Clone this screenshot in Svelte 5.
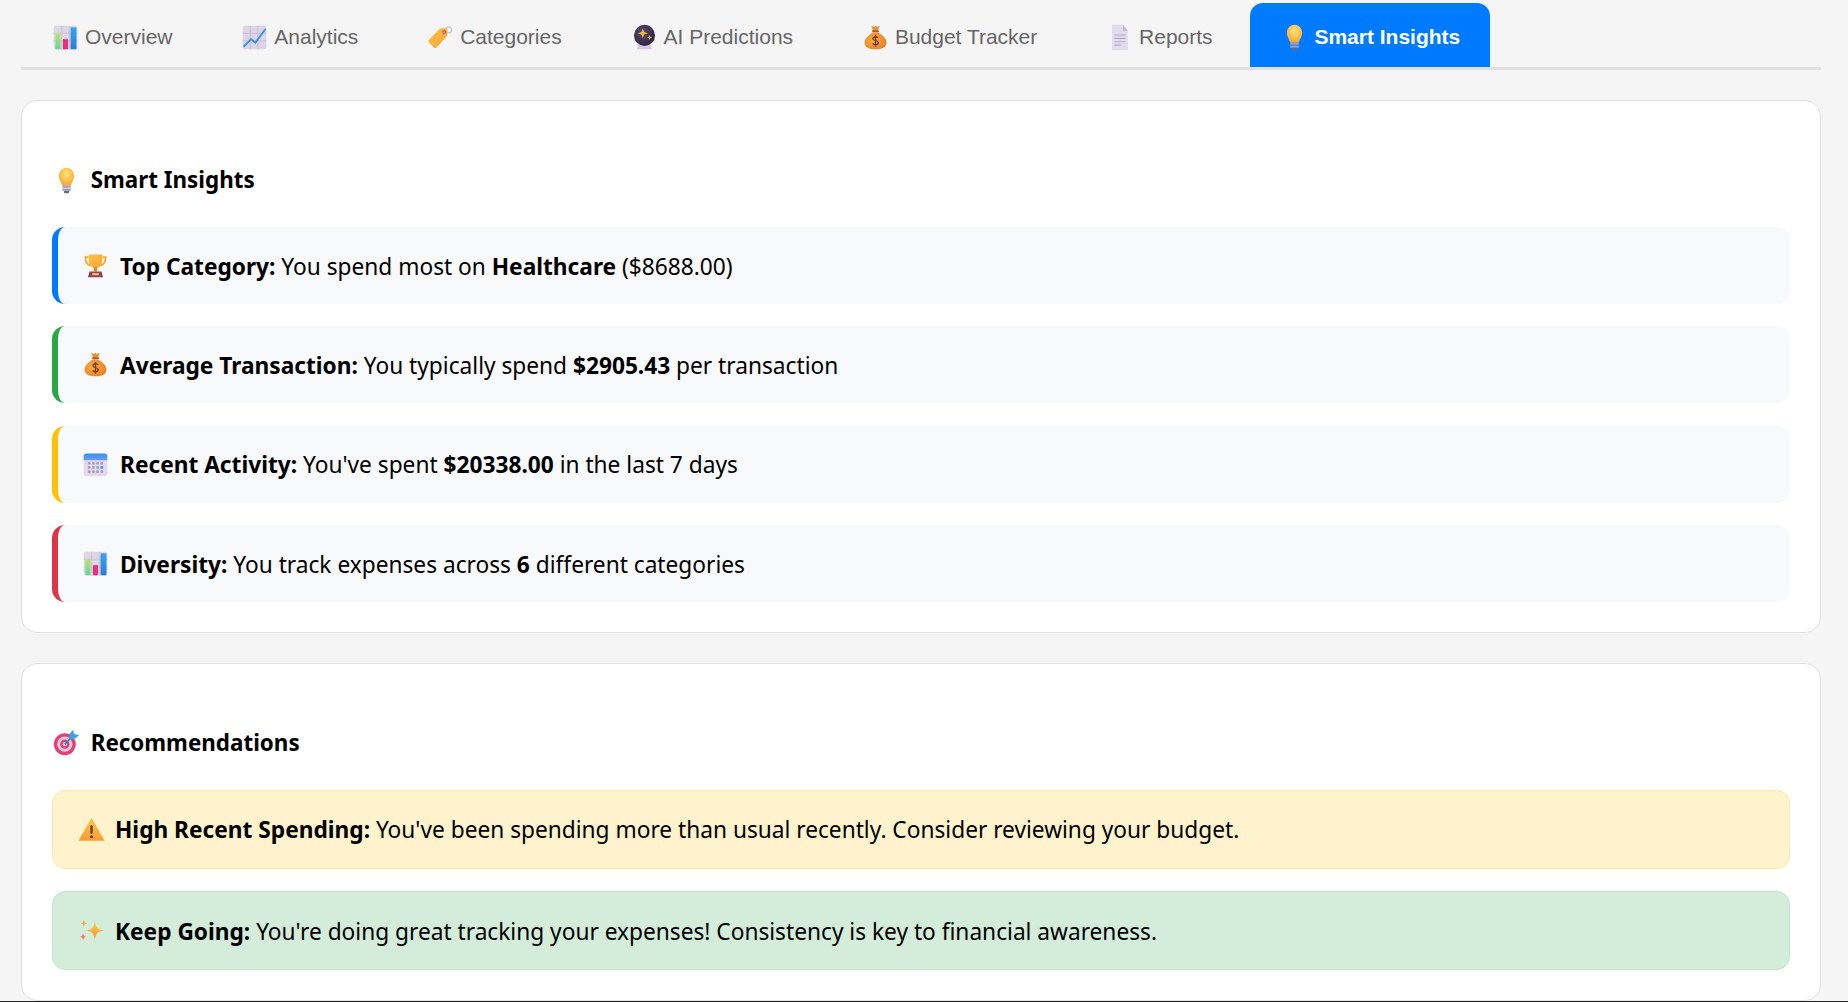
<script>
  const tabs = [
    { icon: 'bars', label: 'Overview' },
    { icon: 'trend', label: 'Analytics' },
    { icon: 'tag', label: 'Categories' },
    { icon: 'ball', label: 'AI Predictions' },
    { icon: 'bag', label: 'Budget Tracker' },
    { icon: 'doc', label: 'Reports' },
    { icon: 'bulb', label: 'Smart Insights', active: true }
  ]

  const insights = [
    { icon: 'trophy', tone: 'blue', title: 'Top Category:', text: 'You spend most on ', bold: 'Healthcare', rest: ' ($8688.00)' },
    { icon: 'bag', tone: 'green', title: 'Average Transaction:', text: 'You typically spend ', bold: '$2905.43', rest: ' per transaction' },
    { icon: 'calendar', tone: 'yellow', title: 'Recent Activity:', text: "You've spent ", bold: '$20338.00', rest: ' in the last 7 days' },
    { icon: 'bars', tone: 'red', title: 'Diversity:', text: 'You track expenses across ', bold: '6', rest: ' different categories' }
  ]

  const recommendations = [
    { icon: 'warning', tone: 'warn', title: 'High Recent Spending:', text: "You've been spending more than usual recently. Consider reviewing your budget." },
    { icon: 'sparkles', tone: 'good', title: 'Keep Going:', text: "You're doing great tracking your expenses! Consistency is key to financial awareness." }
  ]
</script>

{#snippet icon(name)}
  <svg class="emoji" viewBox="0 0 32 32" aria-hidden="true">
    {#if name === 'bars'}
      <rect x="2" y="2" width="28" height="28" rx="3" fill="#ded6e6" />
      <path d="M11.5 2v28M20.5 2v28M2 11h28M2 20h28" stroke="#c9c0d4" stroke-width="1" />
      <rect x="4" y="11" width="6" height="19" fill="url(#g-lime)" />
      <rect x="13" y="18" width="6" height="12" fill="#ec2f7b" />
      <rect x="22" y="4" width="7" height="26" fill="url(#g-sky)" />
    {:else if name === 'trend'}
      <rect x="2" y="2" width="28" height="28" rx="3" fill="#ddd4e8" />
      <path d="M11 2v28M20 2v28M2 11h28M2 20h28" stroke="#c5b9d6" stroke-width="1" />
      <path d="M3 27l9-9 5 4L29 6" fill="none" stroke="#2f97e0" stroke-width="2.2" />
    {:else if name === 'tag'}
      <circle cx="25.5" cy="7" r="3.6" fill="none" stroke="#c9c5cc" stroke-width="1.5" />
      <path d="M2 19L15 6a3 3 0 0 1 2-1h7v8a3 3 0 0 1-1 2L11 28a2 2 0 0 1-2.600 0L2 21.500a2 2 0 0 1 0-2.500z" fill="url(#g-amber)" />
      <circle cx="20.500" cy="9.500" r="2.400" fill="#e8405e" />
      <circle cx="20.500" cy="9.500" r="1" fill="#f5d4c8" />
    {:else if name === 'ball'}
      <path d="M9 24h14l2 6H7z" fill="#d9c6ee" />
      <circle cx="16" cy="13.500" r="12.500" fill="url(#g-ball)" />
      <path d="M14 5l1.500 4.500 4.500 1.500-4.500 1.500-1.500 4.500-1.500-4.500-4.500-1.500 4.500-1.500z" fill="#f6b73c" />
      <path d="M22 13l.8 2.200 2.200.8-2.200.8-.8 2.200-.8-2.200-2.200-.8 2.200-.8z" fill="#f6b73c" />
    {:else if name === 'bag'}
      <path d="M11 2l3 1.500L16 2l2 1.500L21 2l-2 6h-6z" fill="#e8942a" />
      <rect x="12" y="7.500" width="8" height="2.400" rx="1" fill="#a85a2a" />
      <path d="M13 10C7 13 3 18 3 22c0 5 4 8 13 8s13-3 13-8c0-4-4-9-10-12z" fill="url(#g-bag)" />
      <path d="M19 16.500c-.8-1-1.800-1.400-3-1.400-1.700 0-3 .9-3 2.300 0 3.200 6.200 1.600 6.200 4.800 0 1.400-1.400 2.400-3.200 2.400-1.300 0-2.500-.5-3.300-1.500M16 13v14" fill="none" stroke="#7a3d1c" stroke-width="1.600" />
    {:else if name === 'doc'}
      <path d="M7 1h13l6 7v23H7z" fill="#e3dcee" />
      <path d="M20 1l6 7h-6z" fill="#c3b8d4" />
      <path d="M10 13h13M10 17h13M10 21h13M10 25h8" stroke="#b5a9c6" stroke-width="1.400" />
    {:else if name === 'bulb'}
      <path d="M16 1C10.500 1 7 5.500 7 10.500c0 5 2.800 7.400 3.800 11.500h10.400C22.200 17.900 25 15.500 25 10.500 25 5.500 21.500 1 16 1z" fill="url(#g-bulb)" />
      <path d="M11 22h10v2.500H11zM11 25.500h10V28H11z" fill="#a89bb8" />
      <rect x="13" y="28" width="6" height="3" rx="1" fill="#6f6480" />
    {:else if name === 'trophy'}
      <path d="M8 6H4c0 6 2 9 6 10M24 6h4c0 6-2 9-6 10" fill="none" stroke="#eeb02f" stroke-width="2.200" />
      <path d="M8 3h16v7c0 6-3 9-8 9s-8-3-8-9z" fill="url(#g-amber)" />
      <rect x="14" y="18" width="4" height="5" fill="#d98a1f" />
      <path d="M9 23h14l2 7H7z" fill="#8a4560" />
      <rect x="12" y="25" width="8" height="2.500" fill="#f3c24a" />
    {:else if name === 'calendar'}
      <rect x="2" y="3" width="28" height="27" rx="3.500" fill="#e2d9ee" />
      <path d="M2 11V6.500A3.500 3.500 0 0 1 5.500 3h21A3.500 3.500 0 0 1 30 6.500V11z" fill="url(#g-cal)" />
      <g fill="#a79bbb">
        <rect x="7" y="13" width="3" height="3" /><rect x="12" y="13" width="3" height="3" /><rect x="17" y="13" width="3" height="3" />
        <rect x="7" y="18" width="3" height="3" /><rect x="12" y="18" width="3" height="3" /><rect x="17" y="18" width="3" height="3" />
        <rect x="7" y="23" width="3" height="3" /><rect x="12" y="23" width="3" height="3" /><rect x="17" y="23" width="3" height="3" />
        <rect x="22" y="13" width="3" height="3" /><rect x="22" y="23" width="3" height="3" />
      </g>
      <rect x="22" y="18" width="3" height="3" fill="#2f93f0" />
    {:else if name === 'target'}
      <circle cx="14" cy="18" r="13" fill="#e83f74" />
      <circle cx="14" cy="18" r="9" fill="#d9cfe2" />
      <circle cx="14" cy="18" r="5.500" fill="#e83f74" />
      <circle cx="14" cy="18" r="2.500" fill="#d9cfe2" />
      <path d="M14 18L24 8" stroke="#2c86cf" stroke-width="2" />
      <path d="M19 12l1-7 4-4 1 5 6 1-4 4-7 1z" fill="#3ba4ee" />
    {:else if name === 'warning'}
      <path d="M16 3L31 29H1z" fill="url(#g-warn)" stroke="#ffb13d" stroke-width="1" stroke-linejoin="round" />
      <rect x="14.600" y="11" width="2.800" height="10" rx="1.200" fill="#5d4130" />
      <circle cx="16" cy="24.500" r="1.800" fill="#5d4130" />
    {:else if name === 'sparkles'}
      <path d="M20 4c1 8 3 11 11 12-8 1-10 4-11 12-1-8-3-11-11-12 8-1 10-4 11-12z" fill="url(#g-warn)" />
      <path d="M7 3c.4 3 1.300 4 4 4.500-2.700.5-3.600 1.500-4 4.500-.4-3-1.300-4-4-4.500 2.700-.5 3.600-1.500 4-4.500z" fill="#f7a94a" />
      <path d="M6 19c.4 3 1.300 4 4 4.500-2.700.5-3.600 1.500-4 4.500-.4-3-1.300-4-4-4.500 2.700-.5 3.600-1.500 4-4.500z" fill="#f2785c" />
    {/if}
  </svg>
{/snippet}

<svg class="defs" aria-hidden="true">
  <defs>
    <linearGradient id="g-lime" x1="0" y1="0" x2="0" y2="1"><stop offset="0" stop-color="#b7e36a" /><stop offset="1" stop-color="#5fd89a" /></linearGradient>
    <linearGradient id="g-sky" x1="0" y1="0" x2="0" y2="1"><stop offset="0" stop-color="#35a4f2" /><stop offset="1" stop-color="#2a7fd0" /></linearGradient>
    <linearGradient id="g-amber" x1="0" y1="0" x2="1" y2="1"><stop offset="0" stop-color="#fdc243" /><stop offset="1" stop-color="#f7a53a" /></linearGradient>
    <radialGradient id="g-ball" cx="0.4" cy="0.35" r="0.7"><stop offset="0" stop-color="#5c4a78" /><stop offset="1" stop-color="#2a2436" /></radialGradient>
    <radialGradient id="g-bag" cx="0.4" cy="0.45" r="0.7"><stop offset="0" stop-color="#fdb041" /><stop offset="1" stop-color="#e57a26" /></radialGradient>
    <radialGradient id="g-bulb" cx="0.5" cy="0.35" r="0.65"><stop offset="0" stop-color="#ffe27a" /><stop offset="1" stop-color="#fba82c" /></radialGradient>
    <linearGradient id="g-cal" x1="0" y1="0" x2="0" y2="1"><stop offset="0" stop-color="#2f93f5" /><stop offset="1" stop-color="#6f9cf0" /></linearGradient>
    <linearGradient id="g-warn" x1="0" y1="0" x2="0" y2="1"><stop offset="0" stop-color="#ffc94a" /><stop offset="1" stop-color="#fb9a35" /></linearGradient>
  </defs>
</svg>

<div class="page">
  <nav class="tabs">
    {#each tabs as tab}
      <div class="tab" class:active={tab.active}>
        {@render icon(tab.icon)}
        <span>{tab.label}</span>
      </div>
    {/each}
  </nav>

  <section class="card">
    <h3>{@render icon('bulb')}<span>Smart Insights</span></h3>
    <div class="list">
      {#each insights as item}
        <div class="insight {item.tone}">
          {@render icon(item.icon)}
          <p><strong>{item.title}</strong> {item.text}<strong>{item.bold}</strong>{item.rest}</p>
        </div>
      {/each}
    </div>
  </section>

  <section class="card">
    <h3>{@render icon('target')}<span>Recommendations</span></h3>
    <div class="list">
      {#each recommendations as item}
        <div class="rec {item.tone}">
          {@render icon(item.icon)}
          <p><strong>{item.title}</strong> {item.text}</p>
        </div>
      {/each}
    </div>
  </section>
</div>

<div class="window-edge"></div>

<style>
  :global(body) {
    background: #f5f5f5;
    overflow: hidden;
    color: #000;
    font-family: 'Noto Sans', 'Open Sans', sans-serif;
  }

  .defs {
    display: block;
    width: 0;
    height: 0;
  }

  .page {
    padding: 3px 27px 0 21px;
  }

  .emoji {
    width: 27px;
    height: 27px;
    flex: none;
    display: block;
  }

  .tabs {
    display: flex;
    gap: 7.8px;
    height: 64px;
    border-bottom: 3px solid #e0e0e0;
    margin-bottom: 30px;
    font-family: 'Liberation Sans', Arial, sans-serif;
  }

  .tab {
    display: flex;
    align-items: center;
    gap: 6px;
    box-sizing: border-box;
    height: 64px;
    padding: 4px 30px 0 31px;
    font-size: 21px;
    color: #666;
    border-radius: 13px 13px 0 0;
  }

  .tab.active {
    background: #007bff;
    color: #fff;
    font-weight: 700;
  }

  .card {
    background: #fff;
    border: 1px solid #e0e0e0;
    border-radius: 16px;
    padding: 30px;
    margin-bottom: 29.5px;
  }

  h3 {
    display: flex;
    align-items: center;
    gap: 10.7px;
    margin: 33px 0 31px;
    padding-left: 1px;
    font-size: 22.4px;
    font-weight: 700;
    line-height: 32px;
  }

  .list {
    display: flex;
    flex-direction: column;
    gap: 22.4px;
  }

  .insight,
  .rec {
    display: flex;
    align-items: center;
    font-size: 22.7px;
    line-height: 30px;
    border-radius: 13px;
  }

  p {
    margin: 0;
    padding-top: 2px;
    white-space: pre-wrap;
  }

  .insight {
    height: 77px;
    gap: 11px;
    padding-left: 24px;
    background: #f8f9fa;
    border-left: 6px solid;
  }

  .blue { border-left-color: #007bff; }
  .green { border-left-color: #28a745; }
  .yellow { border-left-color: #ffc107; }
  .red { border-left-color: #dc3545; }

  .rec {
    height: 79px;
    gap: 10px;
    box-sizing: border-box;
    padding-left: 25px;
    border: 1px solid;
  }

  .warn {
    background: #fff3cd;
    border-color: #ffe8a1;
  }

  .good {
    background: #d4edda;
    border-color: #c3e6cb;
  }

  .window-edge {
    position: fixed;
    left: 0;
    right: 0;
    bottom: 0;
    height: 1px;
    background: #222;
  }
</style>
